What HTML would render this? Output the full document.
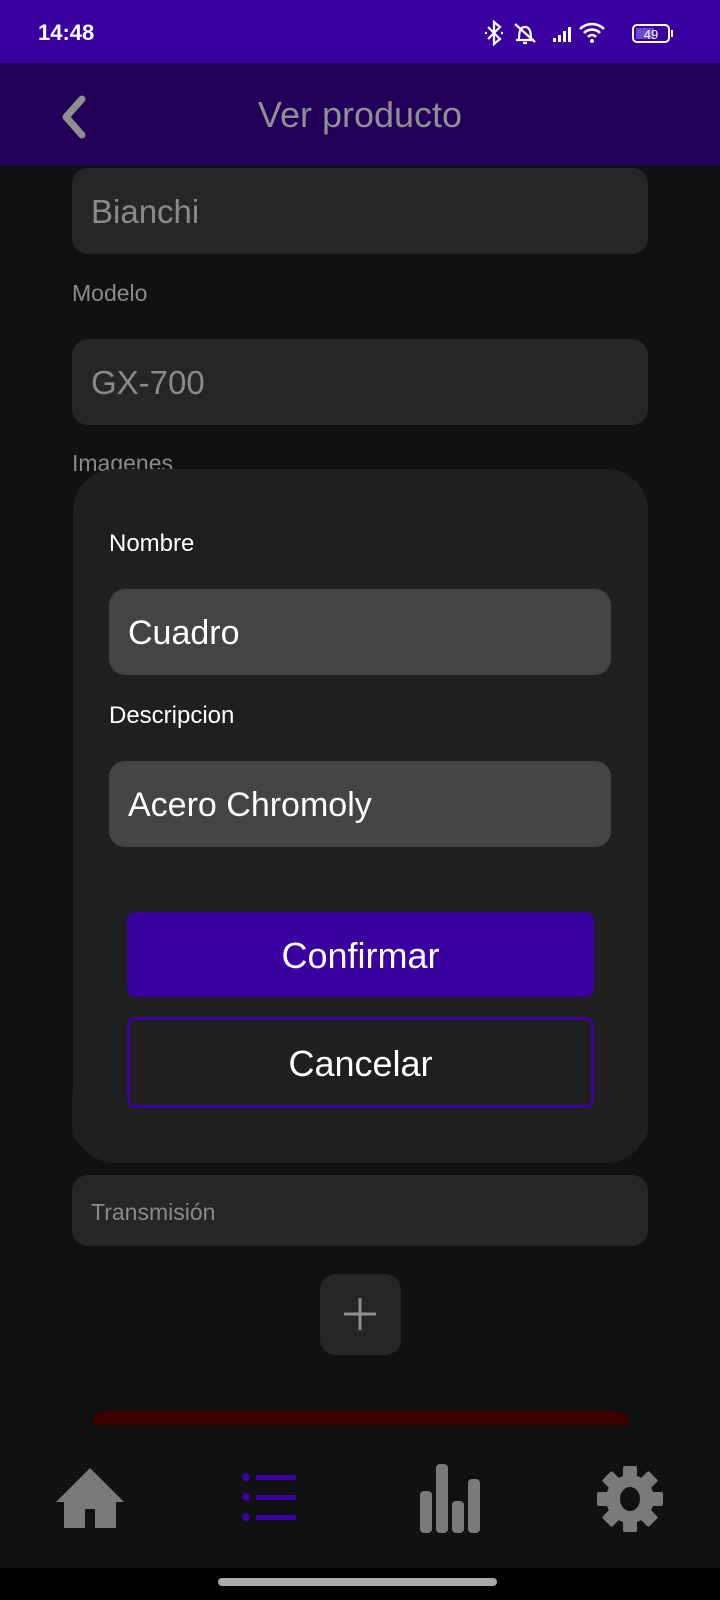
<!DOCTYPE html>
<html><head><meta charset="utf-8"><style>
*{margin:0;padding:0;box-sizing:border-box}
body{width:720px;height:1600px;background:#111111;font-family:"Liberation Sans",sans-serif;position:relative;overflow:hidden}
.a{position:absolute}
.f{position:absolute;left:72px;width:576px;background:#262626;border-radius:16px;color:#8a8a8a}
</style></head><body>
<div class="a" style="left:0;top:0;width:720px;height:63px;background:#3a00a0"></div>
<div class="a" style="left:38px;top:20px;color:#fff;font-size:22px;font-weight:bold">14:48</div>
<svg class="a" style="left:484px;top:18px" width="200" height="30" viewBox="0 0 200 30">
<g stroke="#fff" stroke-width="2.2" fill="none">
<path d="M4 9l12 12-6 5V4l6 5L4 21"/><path d="M1 15h2M17 15h2"/>
<path d="M32 22h18M35 22c0-8 1-13 6-13s6 5 6 13M39 25h4M31 6l20 18"/>
</g>
<g fill="#fff"><rect x="69" y="20" width="3" height="4"/><rect x="74" y="17" width="3" height="7"/><rect x="79" y="13" width="3" height="11"/><rect x="84" y="9" width="3" height="15"/></g>
<g stroke="#fff" stroke-width="2.6" fill="none"><path d="M96 11a17 17 0 0 1 24 0"/><path d="M100 15a11 11 0 0 1 16 0"/><path d="M104 19a5 5 0 0 1 8 0"/></g>
<circle cx="108" cy="23" r="2" fill="#fff"/>
<rect x="149" y="7" width="36" height="17" rx="4" fill="none" stroke="#fff" stroke-width="2"/>
<rect x="152" y="10" width="18" height="11" rx="1" fill="#6a4ad0"/>
<text x="167" y="21" font-size="13" fill="#fff" text-anchor="middle" font-family="Liberation Sans">49</text>
<rect x="187" y="12" width="2" height="7" fill="#fff"/>
</svg>
<div class="a" style="left:0;top:63px;width:720px;height:103px;background:#22005a"></div>
<svg class="a" style="left:58px;top:95px" width="32" height="44" viewBox="0 0 32 44"><path d="M24 4L8 22l16 18" stroke="#8f8f8f" stroke-width="7" fill="none" stroke-linecap="round" stroke-linejoin="round"/></svg>
<div class="a" style="left:0;width:720px;top:94px;text-align:center;color:#8f8f8f;font-size:36px">Ver producto</div>

<div class="f" style="top:168px;height:86px;font-size:33px;padding:25px 0 0 19px">Bianchi</div>
<div class="a" style="left:72px;top:280px;color:#8a8a8a;font-size:23px">Modelo</div>
<div class="f" style="top:339px;height:86px;font-size:33px;padding:25px 0 0 19px">GX-700</div>
<div class="a" style="left:72px;top:450px;color:#8a8a8a;font-size:23px">Imagenes</div>
<div class="f" style="top:1080px;height:66px;background:#1c1c1c"></div>

<div class="a" style="left:73px;top:469px;width:575px;height:694px;background:#1f1f1f;border-radius:42px"></div>
<div class="a" style="left:109px;top:530px;color:#fff;font-size:24px">Nombre</div>
<div class="a" style="left:109px;top:589px;width:502px;height:86px;background:#444;border-radius:16px;color:#fff;font-size:34px;padding:25px 0 0 19px">Cuadro</div>
<div class="a" style="left:109px;top:702px;color:#fff;font-size:24px">Descripcion</div>
<div class="a" style="left:109px;top:761px;width:502px;height:86px;background:#444;border-radius:16px;color:#fff;font-size:34px;padding:25px 0 0 19px">Acero Chromoly</div>
<div class="a" style="left:127px;top:912px;width:467px;height:85px;background:#3a00a0;border-radius:8px;color:#fff;font-size:36px;text-align:center;line-height:88px">Confirmar</div>
<div class="a" style="left:127px;top:1017px;width:467px;height:91px;border:3px solid #3a00a0;border-radius:8px;color:#fff;font-size:36px;text-align:center;line-height:88px">Cancelar</div>

<div class="f" style="top:1175px;height:71px;font-size:23px;padding:24px 0 0 19px">Transmisión</div>
<div class="a" style="left:320px;top:1274px;width:81px;height:81px;background:#262626;border-radius:16px"></div>
<svg class="a" style="left:340px;top:1294px" width="40" height="40"><path d="M20 4v32M4 20h32" stroke="#8f8f8f" stroke-width="3"/></svg>
<div class="a" style="left:92px;top:1411px;width:537px;height:14px;background:#3d0000;border-radius:12px 12px 0 0"></div>

<svg class="a" style="left:54px;top:1466px" width="72" height="62" viewBox="0 0 72 62"><path d="M36 2L2 36h8v26h21V43h10v19h21V36h8z" fill="#7a7a7a"/></svg>
<svg class="a" style="left:240px;top:1470px" width="60" height="54"><g fill="#3a00a0"><circle cx="6" cy="7" r="4"/><circle cx="6" cy="27" r="4"/><circle cx="6" cy="47" r="4"/><rect x="16" y="5" width="40" height="5"/><rect x="16" y="25" width="40" height="5"/><rect x="16" y="45" width="40" height="5"/></g></svg>
<svg class="a" style="left:419px;top:1463px" width="62" height="70"><g fill="#7a7a7a"><rect x="1" y="28" width="12" height="42" rx="4"/><rect x="17" y="1" width="12" height="69" rx="4"/><rect x="33" y="38" width="12" height="32" rx="4"/><rect x="49" y="16" width="12" height="54" rx="4"/></g></svg>
<svg class="a" style="left:597px;top:1466px" width="66" height="66" viewBox="-33 -33 66 66"><g fill="#7a7a7a"><circle r="24"/><g id="t"><rect x="-7" y="-33" width="14" height="14" rx="2"/></g><use href="#t" transform="rotate(45)"/><use href="#t" transform="rotate(90)"/><use href="#t" transform="rotate(135)"/><use href="#t" transform="rotate(180)"/><use href="#t" transform="rotate(225)"/><use href="#t" transform="rotate(270)"/><use href="#t" transform="rotate(315)"/></g><ellipse rx="10" ry="12" fill="#111"/></svg>

<div class="a" style="left:0;top:1568px;width:720px;height:32px;background:#000"></div>
<div class="a" style="left:218px;top:1578px;width:279px;height:8px;background:#aaa;border-radius:4px"></div>
</body></html>
